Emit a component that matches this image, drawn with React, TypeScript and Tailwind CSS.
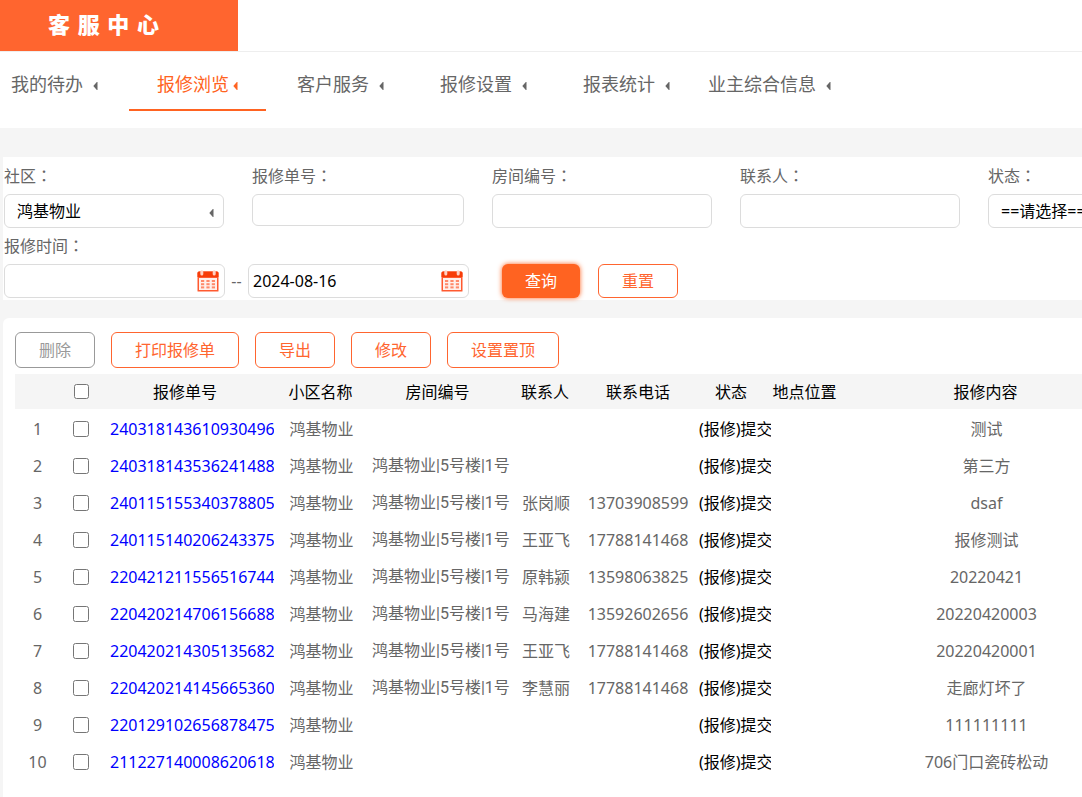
import clsx from 'clsx';

const navItems = ['我的待办', '报修浏览', '客户服务', '报修设置', '报表统计', '业主综合信息'];

const rows = [
  { id: '240318143610930496', room: '', contact: '', phone: '', content: '测试' },
  { id: '240318143536241488', room: '鸿基物业|5号楼|1号', contact: '', phone: '', content: '第三方' },
  { id: '240115155340378805', room: '鸿基物业|5号楼|1号', contact: '张岗顺', phone: '13703908599', content: 'dsaf' },
  { id: '240115140206243375', room: '鸿基物业|5号楼|1号', contact: '王亚飞', phone: '17788141468', content: '报修测试' },
  { id: '220421211556516744', room: '鸿基物业|5号楼|1号', contact: '原韩颍', phone: '13598063825', content: '20220421' },
  { id: '220420214706156688', room: '鸿基物业|5号楼|1号', contact: '马海建', phone: '13592602656', content: '20220420003' },
  { id: '220420214305135682', room: '鸿基物业|5号楼|1号', contact: '王亚飞', phone: '17788141468', content: '20220420001' },
  { id: '220420214145665360', room: '鸿基物业|5号楼|1号', contact: '李慧丽', phone: '17788141468', content: '走廊灯坏了' },
  { id: '220129102656878475', room: '', contact: '', phone: '', content: '111111111' },
  { id: '211227140008620618', room: '', contact: '', phone: '', content: '706门口瓷砖松动' },
];

function Arrow({ className }: { className?: string }) {
  return (
    <svg viewBox="0 0 5 8" className={clsx('h-2 w-[5px] shrink-0 fill-current', className)} aria-hidden="true">
      <path d="M4.5 0v8h-.7L.3 4 3.8 0z" />
    </svg>
  );
}

function CalendarIcon() {
  return (
    <svg viewBox="0 0 22 22" className="h-[22px] w-[22px]" aria-hidden="true">
      <path d="M2 1.5h18a1.5 1.5 0 0 1 1.5 1.5v18a.5.5 0 0 1-.5.5H1a.5.5 0 0 1-.5-.5V3A1.5 1.5 0 0 1 2 1.5z" fill="#ff5a30" />
      <path d="M.5 7V3A1.5 1.5 0 0 1 2 1.5h18A1.5 1.5 0 0 1 21.5 3v4z" fill="#f73c08" />
      <rect x="2" y="8" width="18" height="12" fill="#fff0ec" />
      <rect x="3.3" y=".3" width="3" height="5.2" rx="1.5" fill="#ffd0c2" />
      <rect x="15.7" y=".3" width="3" height="5.2" rx="1.5" fill="#ffd0c2" />
      {[10, 13.2, 16.4].map((y) =>
        [4, 9.4, 14.8].map((x) => (
          <rect key={`${x}-${y}`} x={x} y={y} width="3.2" height="2" fill="#ff8a6a" />
        ))
      )}
    </svg>
  );
}

// The TC face centres the full-width colon in its box
function FieldLabel({ htmlFor, children }: { htmlFor: string; children: string }) {
  return (
    <label htmlFor={htmlFor} className="block h-9 leading-[34px]">
      {children}
      <span className="font-['Noto_Sans_CJK_TC',sans-serif]" lang="zh-TW">
        ：
      </span>
    </label>
  );
}

function Field({ id, label, small }: { id: string; label: string; small?: boolean }) {
  return (
    <div className={clsx('shrink-0', small ? 'w-[212px]' : 'w-[220px]')}>
      <FieldLabel htmlFor={id}>{label}</FieldLabel>
      <input
        id={id}
        type="text"
        className={clsx(
          'block w-full rounded-md border border-[#dcdcdc] bg-white px-2 text-black',
          small ? 'h-8' : 'h-[34px]'
        )}
      />
    </div>
  );
}

function SelectField({ id, label, option }: { id: string; label: string; option: string }) {
  return (
    <div className="w-[220px] shrink-0">
      <FieldLabel htmlFor={id}>{label}</FieldLabel>
      <div className="relative">
        <select
          id={id}
          className="block h-[34px] w-full appearance-none rounded-md border border-[#dcdcdc] bg-white px-3 text-black"
        >
          <option>{option}</option>
        </select>
        <Arrow className="pointer-events-none absolute top-[15px] right-[10px]" />
      </div>
    </div>
  );
}

function DateField({ id, label, value }: { id: string; label: string; value: string }) {
  return (
    <div className="relative w-[221px] shrink-0">
      <input
        id={id}
        type="text"
        aria-label={label}
        defaultValue={value}
        className="block h-[34px] w-full rounded-md border border-[#dcdcdc] bg-white pr-8 pl-1 text-black"
      />
      <div className="pointer-events-none absolute top-[6px] right-[6px]">
        <CalendarIcon />
      </div>
    </div>
  );
}

function OutlineButton({ children, muted }: { children: string; muted?: boolean }) {
  return (
    <button
      type="button"
      className={clsx(
        'h-9 rounded-md border bg-white px-[23px]',
        muted ? 'border-[#999999] text-[#999999]' : 'border-[#ff652f] text-[#ff652f]'
      )}
    >
      {children}
    </button>
  );
}

export default function App() {
  return (
    <div className="flex min-h-screen flex-col overflow-hidden bg-[#f5f5f5] font-['Noto_Sans','Noto_Sans_CJK_SC',sans-serif] text-base text-[#666666]">
      <header className="border-b border-[#eeeeee] bg-white">
        <h1 className="h-[51px] w-[238px] bg-[#ff652f] pl-12 font-['DejaVu_Sans','Noto_Sans_CJK_SC',sans-serif] text-[22px] leading-[51px] font-black text-white">
          客 服 中 心
        </h1>
      </header>

      <nav className="h-[76px] bg-white">
        <ul className="-ml-[14px] flex gap-[6px] text-lg">
          {navItems.map((item) => {
            const active = item === '报修浏览';
            return (
              <li key={item} className="w-[137px] shrink-0">
                <a
                  href="#"
                  className={clsx(
                    'flex h-[59px] items-center justify-center border-b-2 whitespace-nowrap',
                    active ? 'gap-1 border-[#ff6321] text-[#ff6321]' : 'gap-[10px] border-transparent'
                  )}
                >
                  <span className="mt-[6px]">{item}</span>
                  <Arrow className="mt-[10px]" />
                </a>
              </li>
            );
          })}
        </ul>
      </nav>

      {/* Search form */}
      <form className="mt-[29px] ml-[3px] bg-white px-px pt-px pb-[2px]">
        <div className="flex h-[70px] gap-7">
          <SelectField id="community" label="社区" option="鸿基物业" />
          <Field id="order-no" label="报修单号" small />
          <Field id="room-no" label="房间编号" />
          <Field id="contact" label="联系人" />
          <SelectField id="status" label="状态" option="==请选择==" />
        </div>
        <FieldLabel htmlFor="date-from">报修时间</FieldLabel>
        <div className="flex items-center">
          <DateField id="date-from" label="开始时间" value="" />
          <span className="w-[23px] shrink-0 text-center">--</span>
          <DateField id="date-to" label="结束时间" value="2024-08-16" />
          <button
            type="button"
            className="ml-[33px] h-[34px] w-[78px] shrink-0 rounded-md bg-[#ff6321] text-white shadow-[0_0_5px_#ff6321]"
          >
            查询
          </button>
          <button
            type="reset"
            className="ml-[18px] h-[34px] w-20 shrink-0 rounded-md border border-[#ff652f] bg-white text-[#ff652f]"
          >
            重置
          </button>
        </div>
      </form>

      {/* Repair orders */}
      <section className="mt-[18px] ml-[3px] grow overflow-hidden rounded-tl-md bg-white pt-[14px] pl-3">
        <div className="mb-[6px] flex gap-4">
          <OutlineButton muted>删除</OutlineButton>
          <OutlineButton>打印报修单</OutlineButton>
          <OutlineButton>导出</OutlineButton>
          <OutlineButton>修改</OutlineButton>
          <OutlineButton>设置置顶</OutlineButton>
        </div>
        <table className="w-full min-w-[1121px] table-fixed border-separate border-spacing-0 text-center whitespace-nowrap">
          <colgroup>
            <col className="w-[45px]" />
            <col className="w-[42px]" />
            <col className="w-[180px]" />
            <col className="w-[79px]" />
            <col className="w-[153px]" />
            <col className="w-[64px]" />
            <col className="w-[120px]" />
            <col className="w-[74px]" />
            <col className="w-[65px]" />
            <col />
          </colgroup>
          <thead>
            <tr className="h-9 text-black *:border-b *:border-white *:bg-[#f5f5f5] *:p-0 *:font-normal">
              <th></th>
              <th>
                <input type="checkbox" aria-label="全选" className="mx-auto block h-[15px] w-[15px]" />
              </th>
              <th>
                <div className="pr-[14px]">报修单号</div>
              </th>
              <th>
                <div className="pr-[2px]">小区名称</div>
              </th>
              <th>房间编号</th>
              <th>
                <div className="pr-[2px]">联系人</div>
              </th>
              <th>联系电话</th>
              <th>
                <div className="pr-2">状态</div>
              </th>
              <th>地点位置</th>
              <th>
                <div className="pr-[2px]">报修内容</div>
              </th>
            </tr>
          </thead>
          <tbody>
            {rows.map((row, i) => (
              <tr key={row.id} className="h-[37px] *:p-0">
                <td>{i + 1}</td>
                <td>
                  <input type="checkbox" aria-label={row.id} className="mx-auto block h-4 w-4" />
                </td>
                <td>
                  <a href="#" className="mx-2 block overflow-hidden text-left text-[#0000ff]">
                    {row.id}
                  </a>
                </td>
                <td>鸿基物业</td>
                <td>
                  <div className="mr-[3px] ml-[11px] overflow-hidden text-left font-['Roboto','Noto_Sans_CJK_SC',sans-serif]">
                    {row.room}
                  </div>
                </td>
                <td>{row.contact}</td>
                <td>{row.phone}</td>
                <td>
                  <div className="mr-px ml-px overflow-hidden text-left text-black">(报修)提交</div>
                </td>
                <td></td>
                <td>{row.content}</td>
              </tr>
            ))}
          </tbody>
        </table>
      </section>
    </div>
  );
}
